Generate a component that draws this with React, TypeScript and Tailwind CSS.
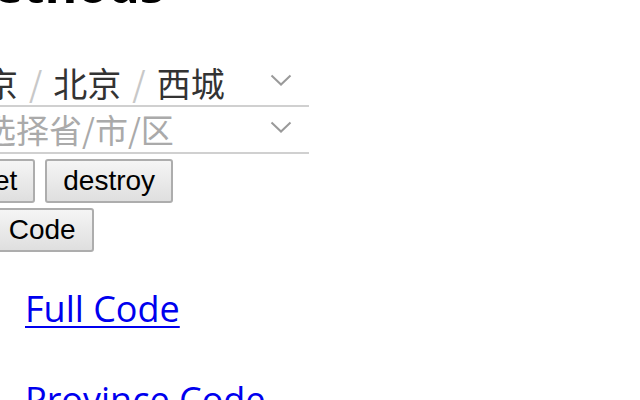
import React from 'react'

const Chevron = () => (
  <svg width="22" height="12" viewBox="0 0 22 12" className="mb-[6px] shrink-0">
    <polyline points="1.5,1.5 11,10.5 20.5,1.5" fill="none" stroke="#9a9a9a" strokeWidth="2" />
  </svg>
)

const Sep = () => <span className="text-[#c8c8c8] mx-[11px]">/</span>

const App = () => {
  const links = ['Full Code', 'Province Code']
  const btn =
    "h-[44px] px-[16px] border-2 border-[#adadad] rounded-[3px] bg-linear-to-b from-[#f5f5f5] to-[#dfdfdf] font-['Liberation_Sans',Arial,sans-serif] text-[28px] leading-none text-black"

  return (
    <div className="w-[640px] h-[400px] overflow-hidden bg-white">
      <div className="-ml-[54px] -mt-[44px] w-[720px] font-['Open_Sans',sans-serif] text-black">
        <h2 className="text-[50px] font-bold leading-[56px] mb-[48px]">Methods</h2>

        {/* area picker */}
        <div className="w-[363px] font-['Noto_Sans_CJK_SC',sans-serif]">
          <div className="h-[47px] flex items-center justify-between pl-[4px] pr-[17px] border-b-2 border-[#d0d0d0] text-[34px]">
            <span className="text-[#333]">
              北京<Sep />北京<Sep />西城
            </span>
            <Chevron />
          </div>
          <div className="h-[47px] flex items-center justify-between pl-[4px] pr-[17px] border-b-2 border-[#d0d0d0] text-[33px]">
            <span className="text-[#aaa]">请选择省/市/区</span>
            <Chevron />
          </div>
        </div>

        <div className="flex flex-col gap-[5px] pt-[5px] -ml-[2px]">
          <div className="flex gap-[10px] -ml-[7px]">
            <button className={btn}>reset</button>
            <button className={btn}>destroy</button>
          </div>
          <div className="flex gap-[10px] -ml-[6px]">
            <button className={`${btn} [word-spacing:6px]`}>get Code</button>
          </div>
        </div>

        <ul className="pl-[79px] pt-[32px] flex flex-col gap-[42px]">
          {links.map((link) => (
            <li key={link} className="text-[36px] leading-[49px]">
              <a href="#" className="text-[#0000ee] underline underline-offset-[4px] decoration-2">
                {link}
              </a>
            </li>
          ))}
        </ul>
      </div>
    </div>
  )
}

export default App
